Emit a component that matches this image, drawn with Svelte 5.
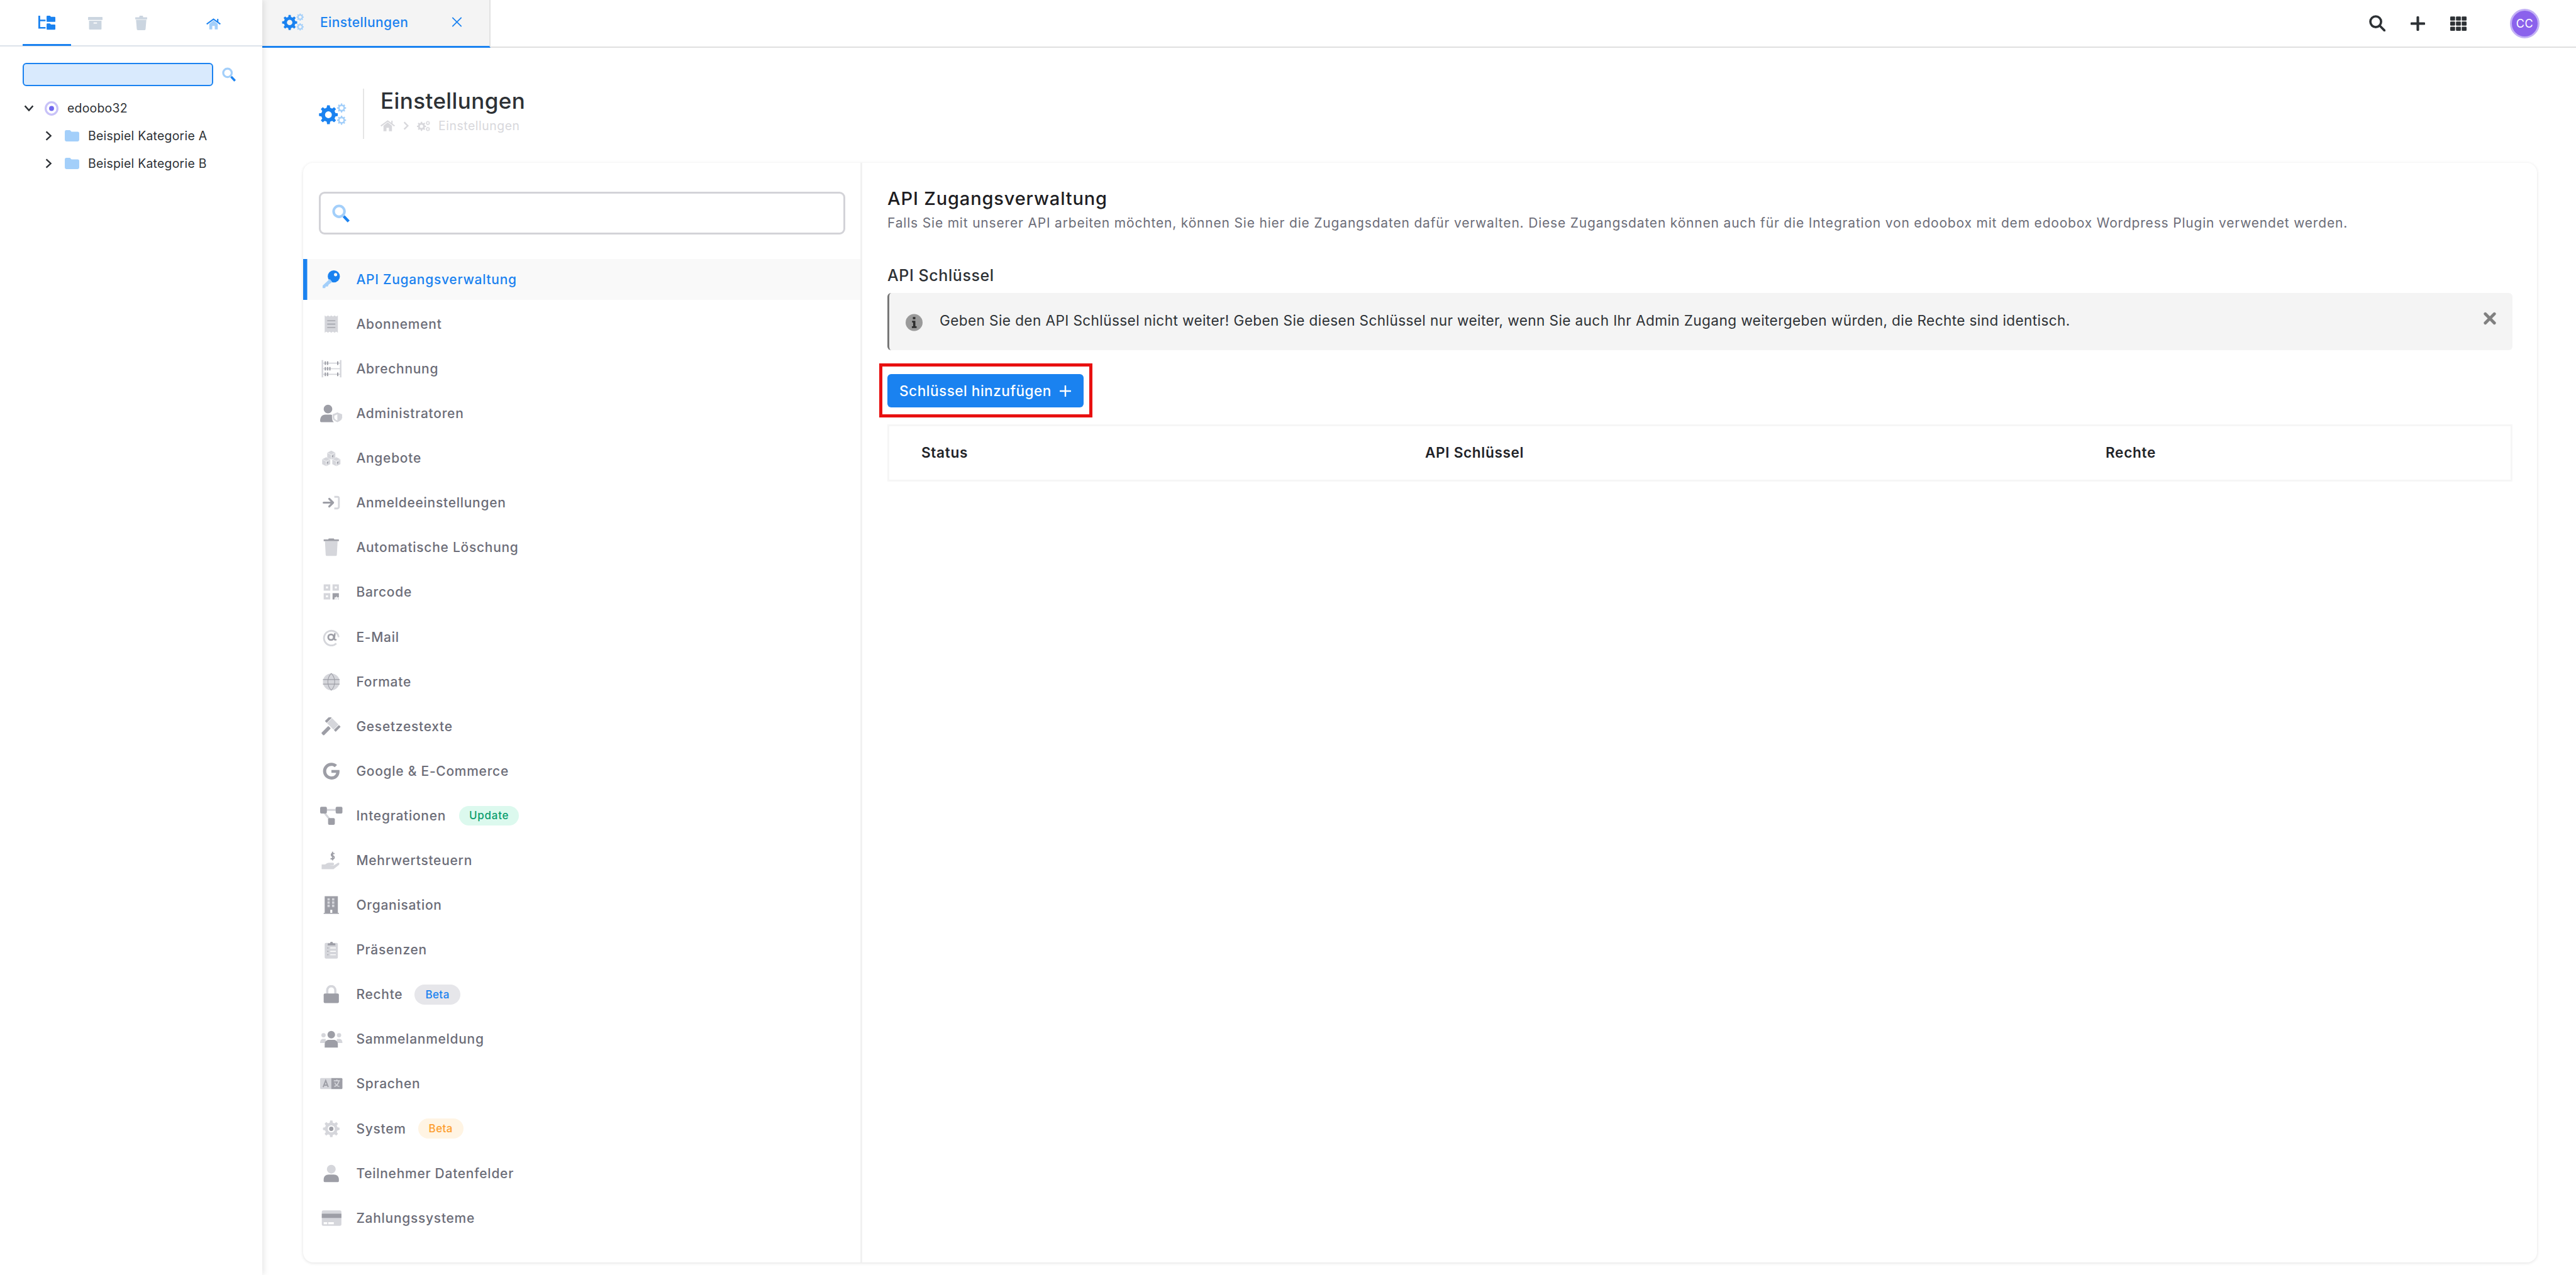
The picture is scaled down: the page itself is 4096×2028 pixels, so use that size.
<script>
	const L = '#d5d6db';
	const D = '#9d9ea6';
	const BLUE = '#1a82f0';
	const SKY = '#a3cffa';

	function gear(cx, cy, r, fill, hole = 0.36) {
		const pts = [];
		const n = 8;
		for (let i = 0; i < n; i++) {
			const a = (i / n) * Math.PI * 2;
			const s = Math.PI / n;
			const at = (ang, rad) => `${(cx + Math.cos(ang) * rad).toFixed(2)} ${(cy + Math.sin(ang) * rad).toFixed(2)}`;
			pts.push(at(a - s * 0.62, r * 0.76), at(a - s * 0.36, r), at(a + s * 0.36, r), at(a + s * 0.62, r * 0.76));
		}
		const h = r * hole;
		const ring = `M${cx - h} ${cy}a${h} ${h} 0 1 0 ${h * 2} 0a${h} ${h} 0 1 0 ${-h * 2} 0Z`;
		return `<path fill="${fill}" fill-rule="evenodd" d="M${pts.join('L')}Z${ring}"/>`;
	}

	// one big gear and two small ones, 44 x 36 box
	const gears = (big, small) =>
		gear(15, 19, 15.5, big) + gear(36.5, 8, 7.5, small, 0.42) + gear(36.5, 28, 7.5, small, 0.42);

	const cube = (x, y) =>
		`<path fill="${L}" d="M${x} ${y - 8.5}l8 4v9.5l-8 4-8-4v-9.5Z"/><path fill="none" stroke="#fff" stroke-width=".8" d="M${x - 8} ${y - 4.5}l8 4 8-4M${x} ${y - 0.5}v9.5"/><path fill="${D}" d="M${x + 1.5} ${y + 1.5}l2.5-1.3v3l-2.5 1.3Z"/>`;

	const icons = {
		key: `<circle cx="27" cy="12" r="12" fill="${BLUE}"/><circle cx="30.5" cy="8.5" r="3.2" fill="#f9f9f9"/><path fill="${SKY}" d="M19 17l5 6-7 5-2 4h-4l-1 3H5v-5Z"/>`,
		receipt: `<path fill="${L}" d="M9 1l3.25 2 3.25-2 3.25 2 3.25-2 3.25 2 3.25-2 3.25 2 3.25-2v34l-3.25-2-3.25 2-3.25-2-3.25 2-3.25-2-3.25 2-3.25-2-3.25 2Z"/><path fill="${D}" d="M14 10.5h16v1.7H14ZM14 17.2h16v1.7H14ZM14 23.8h16v1.7H14Z"/>`,
		abacus: `<path fill="${L}" d="M3 1h3v34H3ZM39 1h3v34h-3ZM6 6h33v2H6ZM6 17h33v2H6ZM6 28h33v2H6Z"/><path fill="${D}" d="M9 3.5h2.5v7H9ZM13.5 3.5H16v7h-2.5ZM33.5 3.5H36v7h-2.5ZM9 14.5h2.5v7H9ZM13.5 14.5H16v7h-2.5ZM18 14.5h2.5v7H18ZM9 25.5h2.5v7H9ZM13.5 25.5H16v7h-2.5ZM33.5 25.5H36v7h-2.5Z"/>`,
		admin: `<circle cx="15.5" cy="9.5" r="8.5" fill="${D}"/><path fill="${D}" d="M0 33c0-8 4-12.5 10-12.5h10c2 0 3 .5 4 1v8c0 2 1 4 3 6H2c-1 0-2-1-2-2.5Z"/><path fill="${L}" stroke="#fff" stroke-width="1.2" d="M34 15.5l10 4v6c0 5-4 8-10 10.5-6-2.5-10-5.5-10-10.5v-6Z"/><path fill="#fff" d="M34 20l-6 2.5v3.5c0 3 2.5 4.5 6 6Z"/>`,
		cubes: cube(22, 12) + cube(12, 25) + cube(32, 25),
		login: `<path fill="none" stroke="${L}" stroke-width="3.5" d="M28 6.5h6a3 3 0 0 1 3 3v17a3 3 0 0 1-3 3h-6"/><path fill="none" stroke="${D}" stroke-width="4" stroke-linecap="round" stroke-linejoin="round" d="M7 18h18M18 10.5l7.5 7.5-7.5 7.5"/>`,
		trash: `<path fill="${D}" d="M16 2.5l1-1.8h10l1 1.8h9V6H7V2.5Z"/><path fill="${L}" d="M9.5 6h25L33 33a2 2 0 0 1-2 2H13a2 2 0 0 1-2-2Z"/>`,
		qr: `<path fill="${L}" fill-rule="evenodd" d="M7 3h13v12.5H7ZM11.5 7.2v4h4v-4ZM24.5 3H37v12.5H24.5ZM29 7.2v4h4v-4ZM7 20.5h13V33H7ZM11.5 24.7v4h4v-4Z"/><path fill="${D}" d="M24.5 20.5H37V29h-4v-3l-2 3h-2.5v4h-4Z"/><path fill="${L}" d="M30 30.5h2.5V33H30ZM34.5 30.5H37V33h-2.5Z"/>`,
		at: `<path fill="none" stroke="${L}" stroke-width="3.5" d="M32 30.5A14.5 14.5 0 1 1 36.5 18"/><circle cx="21.5" cy="18" r="5.5" fill="none" stroke="${D}" stroke-width="3.5"/><path fill="none" stroke="${D}" stroke-width="3" stroke-linecap="round" d="M29 11.5l-1 9c-.2 2 1 3 3 2.5"/>`,
		globe: `<circle cx="22" cy="18" r="16.5" fill="${L}"/><path fill="none" stroke="${D}" stroke-width="1.3" d="M22 1.5c-9 9-9 24 0 33 9-9 9-24 0-33ZM5.5 13.5h33M5.5 22.5h33"/>`,
		gavel: `<g transform="translate(25 13) rotate(45)"><rect x="-15" y="-7" width="5" height="14" rx="1" fill="${D}"/><rect x="-9" y="-7" width="18" height="14" fill="${L}"/><rect x="10" y="-7" width="5" height="14" rx="1" fill="${D}"/><rect x="-3.5" y="9" width="7" height="20" rx="1.5" fill="${D}"/></g>`,
		google: `<path transform="translate(5.7 1) scale(.0668)" fill="${D}" d="M488 261.8C488 403.3 391.1 504 248 504 110.8 504 0 393.2 0 256S110.8 8 248 8c66.8 0 123 24.5 166.3 64.9l-67.5 64.9C258.5 52.6 94.3 116.6 94.3 256c0 86.5 69.1 156.6 153.7 156.6 98.2 0 135-70.4 140.8-106.9H248v-85.3h236.1c2.3 12.7 3.9 24.9 3.9 41.4z"/>`,
		nodes: `<path fill="none" stroke="${L}" stroke-width="3.8" d="M12 6.5h20M9 13l9 11"/><rect y=".3" width="13.3" height="13.3" rx="2.5" fill="${D}"/><rect x="30.7" y=".3" width="13.3" height="13.3" rx="2.5" fill="${D}"/><rect x="15.7" y="22.7" width="13.3" height="13.3" rx="2.5" fill="${D}"/>`,
		tax: `<path fill="none" stroke="${D}" stroke-width="2.4" d="M28.5 4.5h-5a3 3 0 0 0 0 5H26a3 3 0 0 1 0 5.5h-5.5M24.5 1v17"/><path fill="${L}" d="M3 26h7c2-2 5-3.5 8-3.5h7a2.5 2.5 0 0 1 0 5h-5v.5h7l8-5c3-1 4 2 2 4l-9 7c-1 1-2 1.5-3 1.5H3Z"/>`,
		org: `<path fill="${D}" d="M9 .5h26v33h2v1.8H7v-1.8h2Z"/><path fill="${L}" d="M14.5 4.5H19V9h-4.5ZM23.5 4.5H28V9h-4.5ZM14.5 11H19v4.5h-4.5ZM23.5 11H28v4.5h-4.5ZM14.5 17.5H19V22h-4.5ZM23.5 17.5H28V22h-4.5Z"/><path fill="#fff" d="M20 27.5h4v6h-4Z"/>`,
		clip: `<rect x="9" y="4.7" width="26" height="31" rx="2.5" fill="${L}"/><path fill="${D}" d="M15 9.7v-3c0-.8.6-1.2 1.5-1.2h3a3 3 0 0 1 6 0h3c.9 0 1.5.4 1.5 1.2v3Z"/><path fill="#fff" d="M20 13.8h11v1.7H20ZM20 20.5h11v1.7H20ZM20 27.2h11v1.7H20Z"/><circle cx="15.3" cy="14.7" r="1.1" fill="${D}"/><circle cx="15.3" cy="21.3" r="1.1" fill="${D}"/><circle cx="15.3" cy="28" r="1.1" fill="${D}"/>`,
		lock: `<path fill="none" stroke="${L}" stroke-width="4.5" d="M14 18V10a8 8 0 0 1 16 0v8"/><rect x="7" y="16.3" width="30" height="19" rx="2.5" fill="${D}"/>`,
		group: `<circle cx="6.7" cy="10.7" r="4.3" fill="${L}"/><circle cx="37.3" cy="10.7" r="4.3" fill="${L}"/><path fill="${L}" d="M0 26c0-5 2-8 6-8h5v8ZM44 26c0-5-2-8-6-8h-5v8Z"/><circle cx="22" cy="9.7" r="7.5" fill="${D}"/><path fill="${D}" d="M9 35v-6c0-6 4-9 8-9h10c4 0 8 3 8 9v6Z"/>`,
		lang: `<path fill="${L}" d="M2 7h20v22H2a2 2 0 0 1-2-2V9a2 2 0 0 1 2-2Z"/><path fill="${D}" d="M22 7h20a2 2 0 0 1 2 2v18a2 2 0 0 1-2 2H22Z"/><path fill="none" stroke="${D}" stroke-width="2.4" d="M6 25l5-13 5 13M7.8 21h6.4"/><path fill="none" stroke="${L}" stroke-width="2" d="M27 12.5h12M33 10v3M37 13c-1 5-4 9-9 11M29 16c1 4 5 7 9 8"/>`,
		system: gear(22, 18, 16.5, L, 0.42) + `<circle cx="22" cy="18" r="4.3" fill="${D}"/>`,
		user: `<circle cx="22" cy="9.5" r="8.7" fill="${L}"/><path fill="${D}" d="M7 33v-3c0-6 4-9.7 10-9.7h10c6 0 10 3.7 10 9.7v3a2 2 0 0 1-2 2H9a2 2 0 0 1-2-2Z"/>`,
		card: `<rect x="3.3" y="2.7" width="38.7" height="30.6" rx="3" fill="${L}"/><path fill="${D}" d="M3.3 9.3H42v8.4H3.3Z"/><path fill="#fff" d="M7 26h7v4H7ZM16 26h11v4H16Z"/>`
	};

	const items = [
		{ label: 'API Zugangsverwaltung', icon: 'key', active: true },
		{ label: 'Abonnement', icon: 'receipt' },
		{ label: 'Abrechnung', icon: 'abacus' },
		{ label: 'Administratoren', icon: 'admin' },
		{ label: 'Angebote', icon: 'cubes' },
		{ label: 'Anmeldeeinstellungen', icon: 'login' },
		{ label: 'Automatische Löschung', icon: 'trash' },
		{ label: 'Barcode', icon: 'qr' },
		{ label: 'E-Mail', icon: 'at' },
		{ label: 'Formate', icon: 'globe' },
		{ label: 'Gesetzestexte', icon: 'gavel' },
		{ label: 'Google & E-Commerce', icon: 'google' },
		{ label: 'Integrationen', icon: 'nodes', badge: 'Update', tone: 'green' },
		{ label: 'Mehrwertsteuern', icon: 'tax' },
		{ label: 'Organisation', icon: 'org' },
		{ label: 'Präsenzen', icon: 'clip' },
		{ label: 'Rechte', icon: 'lock', badge: 'Beta', tone: 'grey' },
		{ label: 'Sammelanmeldung', icon: 'group' },
		{ label: 'Sprachen', icon: 'lang' },
		{ label: 'System', icon: 'system', badge: 'Beta', tone: 'orange' },
		{ label: 'Teilnehmer Datenfelder', icon: 'user' },
		{ label: 'Zahlungssysteme', icon: 'card' }
	];
</script>

{#snippet searchIcon(w, h)}
	<svg width={w} height={h} viewBox="0 0 34 35">
		<circle cx="13.5" cy="13.5" r="10.5" fill="none" stroke={SKY} stroke-width="5" />
		<path d="M22.5 23l9.5 10" stroke={BLUE} stroke-width="5.5" fill="none" />
	</svg>
{/snippet}

{#snippet homeIcon(w, h, roof, body)}
	<svg width={w} height={h} viewBox="0 0 29 22">
		<path fill={body} d="M6 11l8.5-7L23 11v11h-6v-7h-5v7H6Z" />
		<path fill="none" stroke={roof} stroke-width="2.5" d="M.8 11.5L14.5 1.5l13.7 10M23 1v6" />
	</svg>
{/snippet}

<div class="app">
	<aside class="tree">
		<div class="tree-tabs">
			<div class="tree-tab active">
				<svg width="27" height="23" viewBox="0 0 33 28">
					<path fill={BLUE} d="M0 0h3.5v7.5H14v3H3.5V22H14v3H0ZM16 1.5a1.5 1.5 0 0 1 1.5-1.5h5l2 2h7a1.5 1.5 0 0 1 1.5 1.5v7a1.5 1.5 0 0 1-1.5 1.5h-14a1.5 1.5 0 0 1-1.5-1.5ZM16 16.5a1.5 1.5 0 0 1 1.5-1.5h5l2 2h7a1.5 1.5 0 0 1 1.5 1.5v7a1.5 1.5 0 0 1-1.5 1.5h-14a1.5 1.5 0 0 1-1.5-1.5Z" />
				</svg>
			</div>
			<div class="tree-tab">
				<svg width="23" height="20" viewBox="0 0 29 25">
					<path fill="#cbd5e0" fill-rule="evenodd" d="M1 0h27a1 1 0 0 1 1 1v5H0V1a1 1 0 0 1 1-1ZM2 7.5h25V24a1 1 0 0 1-1 1H3a1 1 0 0 1-1-1ZM11 11v2h7v-2Z" />
				</svg>
			</div>
			<div class="tree-tab narrow">
				<svg width="19" height="23" viewBox="0 0 23 28">
					<path fill="#cbd5e0" d="M7.5 3l1-3h6l1 3H23v4H0V3ZM1.5 8h20l-1.5 18a2 2 0 0 1-2 2H5a2 2 0 0 1-2-2Z" />
				</svg>
			</div>
			<div class="tree-home">{@render homeIcon(23, 18, BLUE, SKY)}</div>
		</div>
		<div class="tree-search">
			<input class="tree-input" aria-label="Suche" />
			{@render searchIcon(22, 23)}
		</div>
		<div class="node root">
			<svg class="chev" width="16" height="10" viewBox="0 0 20 12">
				<path d="M2 1.5l8 9 8-9" fill="none" stroke="#2d3135" stroke-width="3" />
			</svg>
			<svg class="radio" width="22" height="23" viewBox="0 0 27 28">
				<ellipse cx="13.5" cy="14" rx="11.5" ry="12" fill="none" stroke="#c8c2f8" stroke-width="4" />
				<circle cx="13.5" cy="14" r="4.8" fill="#6f66ee" />
			</svg>
			<span>edoobo32</span>
		</div>
		{#each ['Beispiel Kategorie A', 'Beispiel Kategorie B'] as name}
			<div class="node child">
				<svg class="chev" width="11" height="16" viewBox="0 0 14 20">
					<path d="M2 1.5l9 8.5-9 8.5" fill="none" stroke="#2d3135" stroke-width="3" />
				</svg>
				<svg class="folder" width="23" height="18" viewBox="0 0 28 22">
					<path fill={SKY} d="M0 3a3 3 0 0 1 3-3h7l3 3h12a3 3 0 0 1 3 3v13a3 3 0 0 1-3 3H3a3 3 0 0 1-3-3Z" />
				</svg>
				<span>{name}</span>
			</div>
		{/each}
	</aside>

	<div class="main">
		<header class="topbar">
			<div class="tab">
				<svg width="36" height="28" viewBox="0 0 44 36">{@html gears(BLUE, SKY)}</svg>
				<span class="tab-label">Einstellungen</span>
				<svg class="tab-close" width="17" height="16" viewBox="0 0 21 20">
					<path d="M1.5 1l18 18M19.5 1l-18 18" fill="none" stroke={BLUE} stroke-width="2.2" />
				</svg>
			</div>
			<div class="top-actions">
				<svg width="26" height="26" viewBox="0 0 32 32">
					<circle cx="13" cy="13" r="10.5" fill="none" stroke="#2d3135" stroke-width="4.5" />
					<path d="M21 21l9 9" stroke="#2d3135" stroke-width="4.5" stroke-linecap="round" />
				</svg>
				<svg width="23" height="23" viewBox="0 0 28 28">
					<path d="M14 2v24M2 14h24" stroke="#2d3135" stroke-width="5" stroke-linecap="round" />
				</svg>
				<svg width="26" height="23" viewBox="0 0 32 28">
					<g fill="#2d3135">
						<rect width="9.5" height="8" rx="1.5" />
						<rect x="11.3" width="9.5" height="8" rx="1.5" />
						<rect x="22.5" width="9.5" height="8" rx="1.5" />
						<rect y="10" width="9.5" height="8" rx="1.5" />
						<rect x="11.3" y="10" width="9.5" height="8" rx="1.5" />
						<rect x="22.5" y="10" width="9.5" height="8" rx="1.5" />
						<rect y="20" width="9.5" height="8" rx="1.5" />
						<rect x="11.3" y="20" width="9.5" height="8" rx="1.5" />
						<rect x="22.5" y="20" width="9.5" height="8" rx="1.5" />
					</g>
				</svg>
				<div class="avatar">CC</div>
			</div>
		</header>

		<div class="page">
			<div class="page-head">
				<svg width="44" height="35" viewBox="0 0 44 36">{@html gears(BLUE, SKY)}</svg>
				<div class="head-text">
					<h1>Einstellungen</h1>
					<div class="crumbs">
						{@render homeIcon(23, 18, '#d8d8dc', '#d8d8dc')}
						<svg width="9" height="14" viewBox="0 0 11 17">
							<path d="M2 1.5l7 7-7 7" fill="none" stroke="#d8d8dc" stroke-width="3" />
						</svg>
						<svg width="21" height="17" viewBox="0 0 44 36">{@html gears('#d8d8dc', '#d8d8dc')}</svg>
						<span>Einstellungen</span>
					</div>
				</div>
			</div>

			<section class="card">
				<nav class="side">
					<div class="side-search">
						{@render searchIcon(28, 29)}
					</div>
					<ul class="menu">
						{#each items as item}
							<li class="item" class:active={item.active}>
								<svg width="35.5" height="29" viewBox="0 0 44 36">{@html icons[item.icon]}</svg>
								<span class="item-label">{item.label}</span>
								{#if item.badge}<span class="badge {item.tone}">{item.badge}</span>{/if}
							</li>
						{/each}
					</ul>
				</nav>

				<div class="content">
					<h2>API Zugangsverwaltung</h2>
					<p class="sub">Falls Sie mit unserer API arbeiten möchten, können Sie hier die Zugangsdaten dafür verwalten. Diese Zugangsdaten können auch für die Integration von edoobox mit dem edoobox Wordpress Plugin verwendet werden.</p>
					<h3>API Schlüssel</h3>
					<div class="alert">
						<svg class="alert-info" width="27" height="28" viewBox="0 0 34 35">
							<circle cx="17" cy="17.5" r="17" fill="#9a9a9a" />
							<path fill="#2d2d2d" d="M14.5 6.5h5V11h-5ZM13 14h6.5v11H22v3.5h-9.5V25H15v-7.5h-2Z" />
						</svg>
						<span class="alert-text">Geben Sie den API Schlüssel nicht weiter! Geben Sie diesen Schlüssel nur weiter, wenn Sie auch Ihr Admin Zugang weitergeben würden, die Rechte sind identisch.</span>
						<svg class="alert-close" width="20" height="21" viewBox="0 0 25 26">
							<path d="M3.5 4l18 18M21.5 4l-18 18" fill="none" stroke="#808080" stroke-width="6" stroke-linecap="round" />
						</svg>
					</div>
					<div class="add-wrap">
						<button class="add">
							<span>Schlüssel hinzufügen</span>
							<svg width="18" height="18" viewBox="0 0 22 22">
								<path d="M11 1v20M1 11h20" stroke="#fff" stroke-width="3" stroke-linecap="round" />
							</svg>
						</button>
					</div>
					<div class="keys">
						<span>Status</span>
						<span>API Schlüssel</span>
						<span>Rechte</span>
					</div>
				</div>
			</section>
		</div>
	</div>
</div>

<style>
	:global(body) {
		margin: 0;
		background: #fff;
		font-family: Inter, 'Noto Sans', sans-serif;
		color: #2d3135;
	}
	.app {
		display: flex;
		height: 2028px;
		overflow: hidden;
	}
	.tree {
		width: 417px;
		flex: none;
		box-shadow: 3px 0 9px rgba(0, 0, 0, 0.09);
		position: relative;
		font-size: 19.4px;
		letter-spacing: 0.25px;
		color: #2d3135;
	}
	.tree-tabs {
		display: flex;
		align-items: center;
		height: 74px;
		padding-left: 36px;
		box-sizing: border-box;
		border-bottom: 2px solid #dde3ea;
	}
	.tree-tab {
		width: 77px;
		height: 74px;
		box-sizing: border-box;
		display: flex;
		align-items: center;
		justify-content: center;
		padding-top: 4px;
		border-bottom: 3px solid transparent;
	}
	.tree-tab.active {
		border-bottom-color: #1a82f0;
	}
	.tree-tab.narrow {
		width: 68px;
	}
	.tree-home {
		margin-left: 70px;
		padding-top: 4px;
		line-height: 0;
	}
	.tree-search {
		display: flex;
		align-items: center;
		gap: 14px;
		margin: 26px 0 0 36px;
	}
	.tree-input {
		width: 303px;
		height: 37px;
		box-sizing: border-box;
		background: #d9eafd;
		border: 2.5px solid #1a82f0;
		border-radius: 6px;
		padding: 0;
		outline: none;
	}
	.node {
		display: flex;
		align-items: center;
		height: 44px;
	}
	.root {
		margin-top: 13px;
		padding-left: 38px;
	}
	.root .chev {
		margin-right: 17px;
	}
	.root .radio {
		margin-right: 14px;
	}
	.child {
		padding-left: 72px;
	}
	.child .chev {
		margin-right: 20px;
	}
	.child .folder {
		margin-right: 14px;
	}
	.main {
		flex: 1;
		min-width: 0;
		display: flex;
		flex-direction: column;
	}
	.topbar {
		display: flex;
		justify-content: space-between;
		height: 76px;
		box-sizing: border-box;
		border-bottom: 2px solid #e0e0e0;
	}
	.tab {
		width: 363px;
		height: 76px;
		box-sizing: border-box;
		display: flex;
		align-items: center;
		padding: 0 0 3px 31px;
		background: #f4f4f4;
		border-bottom: 3.5px solid #1a82f0;
		border-right: 2px solid #e2e2e2;
	}
	.tab-label {
		margin-left: 25px;
		font-size: 21px;
		letter-spacing: 0.4px;
		font-weight: 500;
		color: #1a82f0;
	}
	.tab-close {
		margin-left: auto;
		margin-right: 43px;
	}
	.top-actions {
		display: flex;
		align-items: center;
		gap: 40px;
		padding-right: 58px;
	}
	.avatar {
		width: 47px;
		height: 47px;
		box-sizing: border-box;
		margin-left: 29px;
		border-radius: 50%;
		background: #8b62ec;
		border: 3.5px solid #c3b1f5;
		color: #fff;
		font-size: 18px;
		letter-spacing: 0.04em;
		display: flex;
		align-items: center;
		justify-content: center;
	}
	.page {
		padding: 65px 62px 0 65px;
	}
	.page-head {
		display: flex;
		align-items: center;
		height: 80px;
		margin-bottom: 38px;
		padding-left: 25px;
	}
	.head-text {
		height: 80px;
		margin-left: 26px;
		padding-left: 26px;
		border-left: 2px solid #e6e6e6;
	}
	h1 {
		margin: 0;
		font-size: 35px;
		line-height: 38px;
		letter-spacing: 0.4px;
		font-weight: 500;
		color: #2d3135;
	}
	.crumbs {
		display: flex;
		align-items: center;
		gap: 13px;
		margin-top: 3px;
		height: 36px;
		font-size: 19.4px;
		letter-spacing: 0.55px;
		color: #d8d8dc;
	}
	.card {
		display: flex;
		height: 1749px;
		border-radius: 16px;
		box-shadow: 0 1px 5px rgba(0, 0, 0, 0.12);
	}
	.side {
		width: 889px;
		flex: none;
		box-sizing: border-box;
		border-right: 3px solid #f1f1f1;
	}
	.side-search {
		display: flex;
		align-items: center;
		height: 68px;
		box-sizing: border-box;
		margin: 46px 24px 39px 25px;
		padding-left: 18px;
		border: 3px solid #d3d3d8;
		border-radius: 9px;
	}
	.menu {
		list-style: none;
		margin: 0;
		padding: 0;
	}
	.item {
		display: flex;
		align-items: center;
		height: 64.6px;
		margin-bottom: 6.5px;
		padding-left: 27.3px;
		color: #6c6d78;
		font-size: 21px;
		font-weight: 500;
	}
	.item.active {
		background: #f9f9f9;
		color: #1a82f0;
		box-shadow: inset 6.5px 0 0 #1a82f0;
	}
	.item-label {
		margin-left: 21.6px;
		letter-spacing: 0.72px;
	}
	.badge {
		margin-left: 19px;
		height: 31.5px;
		padding: 0 17px;
		border-radius: 16px;
		display: flex;
		align-items: center;
		font-size: 17px;
		letter-spacing: 0.4px;
		font-weight: 500;
	}
	.badge.green {
		margin-left: 21px;
		background: #dcf9ee;
		color: #0b9e6e;
		padding: 0 16px;
		letter-spacing: 0.7px;
	}
	.badge.grey {
		background: #e6e6ea;
		color: #1a82f0;
	}
	.badge.orange {
		background: #fff4e3;
		color: #fd9e2d;
	}
	.content {
		flex: 1;
		min-width: 0;
		padding: 0 39px 0 40px;
	}
	h2 {
		margin: 39px 0 0;
		font-size: 29px;
		line-height: 36px;
		letter-spacing: 0.86px;
		font-weight: 500;
		color: #1d1d22;
	}
	.sub {
		margin: 6px 0 0;
		font-size: 21px;
		line-height: 30px;
		letter-spacing: 0.81px;
		color: #6c6d78;
		white-space: nowrap;
	}
	h3 {
		margin: 52px 0 0;
		font-size: 25px;
		line-height: 32px;
		letter-spacing: 0.58px;
		font-weight: 500;
		color: #2d3135;
	}
	.alert {
		display: flex;
		align-items: flex-start;
		height: 91px;
		box-sizing: border-box;
		margin-top: 12px;
		padding: 0 26px;
		background: #f4f4f4;
		border-left: 3px solid #777;
		border-radius: 6px;
		font-size: 22.6px;
		letter-spacing: 0.39px;
		line-height: 32px;
		color: #2d3135;
	}
	.alert-info {
		margin-top: 33px;
		flex: none;
	}
	.alert-text {
		margin: 28px 0 0 27px;
	}
	.alert-close {
		margin: 30px 0 0 auto;
	}
	.add-wrap {
		position: relative;
		width: 312px;
		margin-top: 38px;
	}
	/* red marker drawn over the screenshot */
	.add-wrap::after {
		content: '';
		position: absolute;
		left: -13px;
		top: -17px;
		width: 339px;
		height: 86px;
		box-sizing: border-box;
		border: 5px solid #e81010;
		pointer-events: none;
	}
	.add {
		display: flex;
		align-items: center;
		gap: 13px;
		width: 312px;
		height: 53px;
		box-sizing: border-box;
		padding: 0 0 0 19px;
		background: #1a82f0;
		border: none;
		border-radius: 6px;
		color: #fff;
		font: inherit;
		font-size: 22.6px;
		letter-spacing: 0.5px;
		font-weight: 500;
	}
	.keys {
		display: grid;
		grid-template-columns: 801px 1082px 1fr;
		align-items: center;
		height: 91px;
		box-sizing: border-box;
		margin-top: 27px;
		padding: 0 0 2px 51px;
		border: 3px solid #f6f6f6;
		font-size: 22.6px;
		letter-spacing: 0.67px;
		font-weight: 600;
		color: #1f2328;
	}
</style>
